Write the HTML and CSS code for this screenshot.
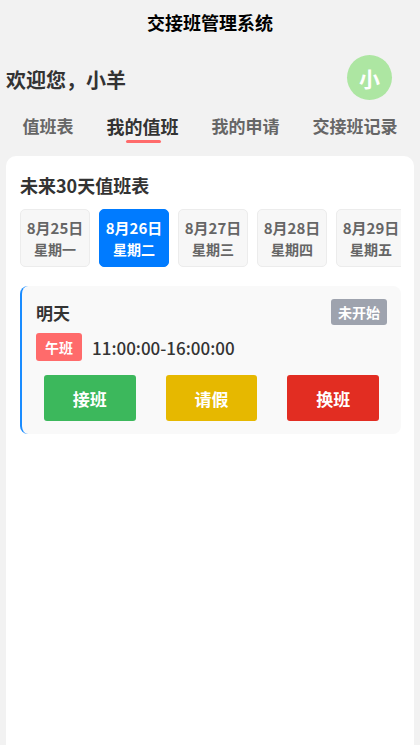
FILE: index.html
```html
<!DOCTYPE html>
<html lang="zh-CN">
<head>
    <meta charset="UTF-8">
    <meta name="viewport" content="width=device-width, initial-scale=1.0">
    <title>交接班管理系统</title>
    <link rel="stylesheet" href="styles.css">
</head>
<body>
    <header class="nav-bar">交接班管理系统</header>

    <div class="user-row">
        <div class="welcome">欢迎您，小羊</div>
        <div class="avatar">小</div>
    </div>

    <nav class="tabs">
        <span class="tab">值班表</span>
        <span class="tab active">我的值班</span>
        <span class="tab">我的申请</span>
        <span class="tab">交接班记录</span>
    </nav>

    <main class="panel">
        <h2 class="panel-title">未来30天值班表</h2>

        <div class="date-list">
            <div class="date-item">
                <div class="date-day">8月25日</div>
                <div class="date-week">星期一</div>
            </div>
            <div class="date-item selected">
                <div class="date-day">8月26日</div>
                <div class="date-week">星期二</div>
            </div>
            <div class="date-item">
                <div class="date-day">8月27日</div>
                <div class="date-week">星期三</div>
            </div>
            <div class="date-item">
                <div class="date-day">8月28日</div>
                <div class="date-week">星期四</div>
            </div>
            <div class="date-item">
                <div class="date-day">8月29日</div>
                <div class="date-week">星期五</div>
            </div>
        </div>

        <div class="duty-card">
            <div class="duty-head">
                <span class="duty-day">明天</span>
                <span class="status">未开始</span>
            </div>
            <div class="duty-time">
                <span class="shift-tag">午班</span>
                <span class="time-range">11:00:00-16:00:00</span>
            </div>
            <div class="duty-actions">
                <button class="btn btn-take">接班</button>
                <button class="btn btn-leave">请假</button>
                <button class="btn btn-swap">换班</button>
            </div>
        </div>
    </main>
</body>
</html>
```

FILE: styles.css
```css
* {
    box-sizing: border-box;
}

html, body {
    height: 100%;
}

body {
    margin: 0;
    font-family: "Noto Sans CJK SC", "Noto Sans", sans-serif;
    background-color: #f2f2f2;
    color: #333;
    display: flex;
    flex-direction: column;
    overflow: hidden;
}

.nav-bar {
    height: 44px;
    line-height: 44px;
    text-align: center;
    font-size: 18px;
    font-weight: bold;
    color: #000;
}

.user-row {
    display: flex;
    justify-content: space-between;
    align-items: center;
    padding: 11px 28px 0 6px;
}

.welcome {
    font-size: 20px;
    font-weight: bold;
    color: #333;
    padding-top: 3px;
}

.avatar {
    width: 45px;
    height: 45px;
    border-radius: 50%;
    background-color: #ade6a2;
    color: #fff;
    font-size: 21px;
    font-weight: bold;
    display: flex;
    justify-content: center;
    align-items: center;
}

.tabs {
    display: flex;
    justify-content: space-around;
    align-items: flex-start;
    padding: 12px 6px 0;
    height: 56px;
}

.tab {
    position: relative;
    font-size: 17px;
    font-weight: bold;
    color: #666;
    line-height: 28px;
}

.tab.active {
    font-size: 18px;
    color: #333;
}

.tab.active::after {
    content: "";
    position: absolute;
    left: 50%;
    bottom: -3px;
    width: 35px;
    height: 3px;
    margin-left: -17px;
    border-radius: 2px;
    background-color: #ff6b6b;
}

.panel {
    flex: 1;
    margin: 0 6px;
    background-color: #fff;
    border-radius: 10px 10px 0 0;
    padding: 16px 13px 0 14px;
}

.panel-title {
    margin: 0 0 11px;
    font-size: 18px;
    font-weight: bold;
    line-height: 26px;
    color: #333;
}

.date-list {
    display: flex;
    gap: 9px;
    overflow: hidden;
}

.date-item {
    flex: 0 0 70px;
    height: 58px;
    border: 1px solid #ececec;
    border-radius: 5px;
    background-color: #f7f7f7;
    color: #666;
    font-weight: bold;
    text-align: center;
    padding-top: 7px;
}

.date-item.selected {
    background-color: #007bff;
    border-color: #007bff;
    color: #fff;
}

.date-day {
    font-size: 15px;
    line-height: 22px;
}

.date-week {
    font-size: 14px;
    line-height: 20px;
}

.duty-card {
    margin-top: 19px;
    background-color: #f9f9f9;
    border-left: 2px solid #1a8cff;
    border-radius: 8px;
    padding: 13px 14px 13px 14px;
}

.duty-head {
    display: flex;
    justify-content: space-between;
    align-items: center;
}

.duty-day {
    font-size: 17px;
    font-weight: bold;
    color: #333;
}

.status {
    height: 26px;
    line-height: 26px;
    padding: 0 7px;
    border-radius: 3px;
    background-color: #9ea3ae;
    color: #fff;
    font-size: 14px;
    font-weight: bold;
}

.duty-time {
    display: flex;
    align-items: center;
    gap: 10px;
    margin-top: 8px;
}

.shift-tag {
    height: 28px;
    line-height: 28px;
    padding: 0 9px;
    border-radius: 3px;
    background-color: #ff6b6b;
    color: #fff;
    font-size: 14px;
    font-weight: bold;
}

.time-range {
    font-size: 17px;
    font-weight: 500;
    color: #333;
}

.duty-actions {
    display: flex;
    gap: 30px;
    padding: 0 8px;
    margin-top: 14px;
}

.btn {
    flex: 1;
    height: 46px;
    border: none;
    border-radius: 3px;
    color: #fff;
    font-family: inherit;
    font-size: 17px;
    font-weight: bold;
}

.btn-take {
    background-color: #3cb85c;
}

.btn-leave {
    background-color: #e6b800;
}

.btn-swap {
    background-color: #e22d22;
}
```
